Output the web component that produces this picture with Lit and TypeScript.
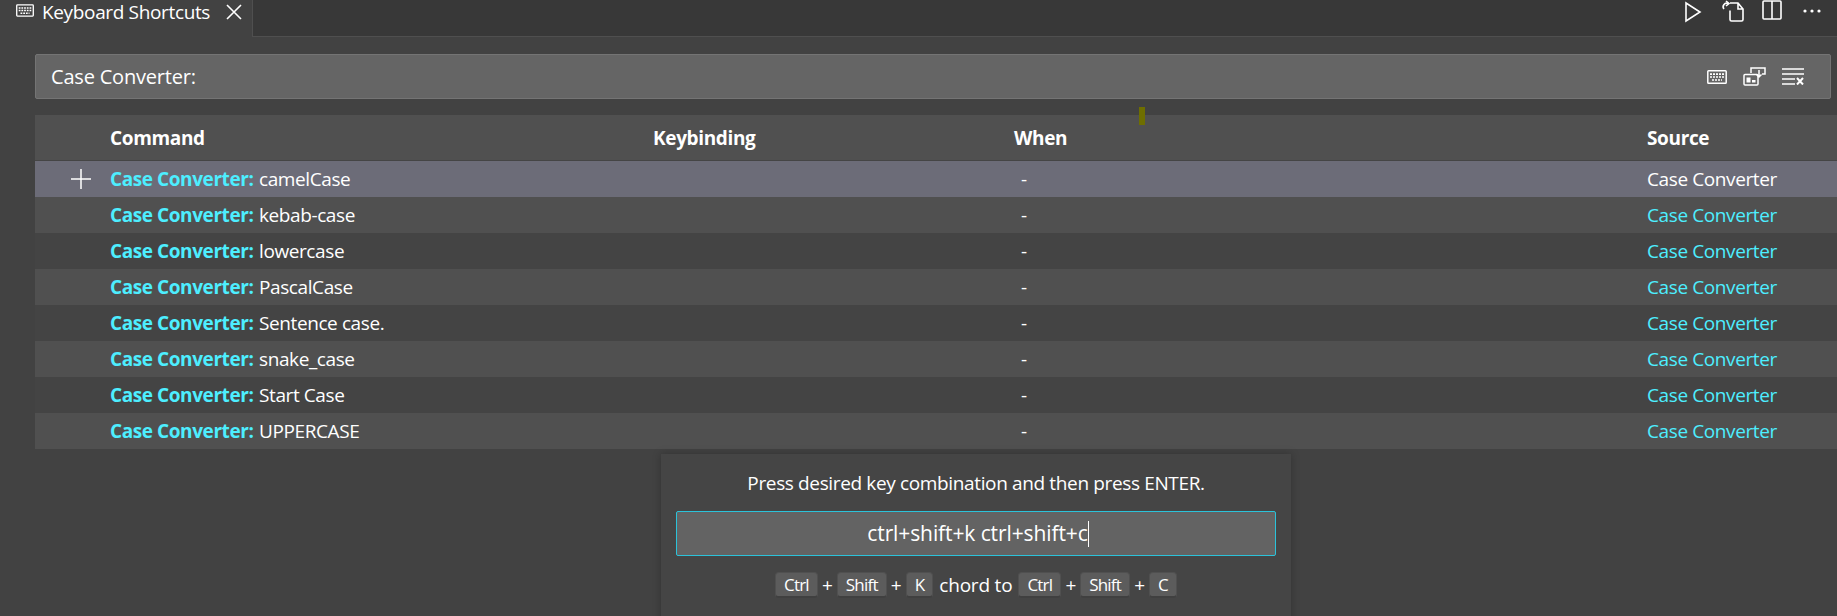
import { LitElement, html, css, svg } from "lit";
import { customElement } from "lit/decorators.js";

const rows = ["camelCase", "kebab-case", "lowercase", "PascalCase", "Sentence case.", "snake_case", "Start Case", "UPPERCASE"];

const kb = (w: number, h: number) => svg`<svg class="ico" width=${w} height=${h} viewBox="0 0 20 14" fill="none" stroke="#fff" stroke-width="1.5"><rect x="0.8" y="0.8" width="18.4" height="12.4" rx="0.8"/><path d="M3 4.200h14M3 7h14M5 10h10" stroke-width="1.7" stroke-dasharray="2 1"/></svg>`;

@customElement("app-root")
export class AppRoot extends LitElement {
  static styles = css`
    :host { display: block; width: 1837px; height: 616px; overflow: hidden; background: #424242; color: #fff;
      font-family: "Open Sans", "Noto Sans", sans-serif; font-size: 19px; position: relative; }
    .tabs { display: flex; height: 37px; background: #383838; }
    .tab { width: 253px; height: 37px; box-sizing: border-box; background: #424242; border-right: 1px solid #4f4f4f;
      display: flex; align-items: flex-start; padding: 0 0 0 16px; }
    .tab .ico { margin-top: 4px; }
    .tab .label { margin-left: 8px; line-height: 25px; font-size: 19px; letter-spacing: -0.35px; white-space: nowrap; }
    .close { margin-left: 15px; margin-top: 3px; }
    .rest { flex: 1; border-bottom: 1px solid #4f4f4f; display: flex; justify-content: flex-end; align-items: flex-start; gap: 16px; padding: 0 15px 0 0; }
    .rest svg { display: block; }
    .search { margin: 17px 6px 0 35px; height: 45px; box-sizing: border-box; background: #656565; border: 1px solid #747474; border-radius: 2px;
      display: flex; align-items: center; padding: 0 26px 0 15px; font-size: 20px; letter-spacing: -0.2px; }
    .search .t { flex: 1; }
    .search .icons { display: flex; align-items: center; gap: 16px; }
    .table { margin: 16px 0 0 35px; }
    .row { display: grid; grid-template-columns: 75px 543px 361px 633px 1fr; height: 36px; align-items: center; background: #505050; font-size: 19px; letter-spacing: -0.4px; line-height: 34px; }
    .row.alt { background: #444444; }
    .row.sel { background: #6c6c78; }
    .row.head { height: 46px; font-weight: 700; letter-spacing: -0.35px; border-bottom: 1px solid #454545; box-sizing: border-box; padding-top: 1px; }
    .act { display: flex; justify-content: flex-end; }
    .act svg { margin-right: 19px; }
    .hl { color: #4deeff; font-weight: 700; letter-spacing: -0.42px; margin-right: 1px; }
    .src { color: #4deeff; }
    .dash { padding-left: 7px; }
    .mark { position: absolute; left: 1139px; top: 107px; width: 6px; height: 18px; background: #6e6e00; }
    .dialog { position: absolute; left: 661px; top: 454px; width: 630px; height: 170px; box-sizing: border-box; background: #454545;
      box-shadow: 0 0 8px rgba(0,0,0,.25); padding: 16px 15px 0; display: flex; flex-direction: column; align-items: center; }
    .msg { font-size: 19px; letter-spacing: -0.36px; line-height: 26px; white-space: nowrap; }
    .input { margin-top: 15px; width: 600px; height: 45px; box-sizing: border-box; background: #636363; border: 1px solid #2bc3da; border-radius: 2px;
      display: flex; align-items: center; justify-content: center; font-size: 21px; letter-spacing: -0.1px; padding: 0 0 2px 4px; }
    .caret { display: inline-block; width: 1px; height: 26px; background: #fff; margin-top: 2px; }
    .keys { margin-top: 16px; display: flex; align-items: center; font-size: 19px; letter-spacing: -0.2px; }
    kbd { font: inherit; font-size: 17px; letter-spacing: -0.8px; background: #5c5c5c; border: 1px solid #505050; border-bottom: 2px solid #404040; border-radius: 4px; padding: 0 8px; line-height: 23px; display: inline-block; }
    .p { width: 19px; text-align: center; }
    .chord { margin: 0 6px; }
  `;
  render() {
    return html`
      <div class="tabs">
        <div class="tab">${kb(18, 13)}<span class="label">Keyboard Shortcuts</span>
          <svg class="close" width="18" height="18" viewBox="0 0 18 18" stroke="#fff" stroke-width="1.6"><path d="M2 2l14 14M16 2L2 16"/></svg>
        </div>
        <div class="rest">
          <svg width="22" height="24" viewBox="0 0 22 24" fill="none" stroke="#fff" stroke-width="1.6"><path d="M3 3l14 9-14 9z"/></svg>
          <svg width="24" height="24" viewBox="0 0 24 24" fill="none" stroke="#fff" stroke-width="1.6"><path d="M9 3h8l5 6v10.500a1.500 1.500 0 0 1-1.500 1.500H10.500A1.500 1.500 0 0 1 9 19.500v-9M17 3v6h5M3 9a3.500 3.500 0 0 1 4-5.500M5 1l3 2.500L5 6"/></svg>
          <svg width="25" height="22" viewBox="0 0 25 22" fill="none" stroke="#fff" stroke-width="1.6"><rect x="2" y="1" width="18" height="18" rx="1"/><path d="M11 1v18"/></svg>
          <svg width="20" height="22" viewBox="0 0 20 22" fill="#fff"><circle cx="3" cy="11" r="1.600"/><circle cx="10" cy="11" r="1.600"/><circle cx="17" cy="11" r="1.600"/></svg>
        </div>
      </div>
      <div class="search">
        <span class="t">Case Converter:</span>
        <div class="icons">
          ${kb(20, 14)}
          <svg width="23" height="19" viewBox="0 0 23 19" fill="none" stroke="#fff" stroke-width="1.500"><path d="M8 6V1h14v6h-3M16 3v7M13.500 7.500L16 10l2.500-2.500"/><rect x="1" y="7.500" width="14" height="10.500" rx="1"/><path d="M3.500 10.500h4v5h-4zM9 13h3.500v2.500H9z" fill="#fff" stroke="none"/></svg>
          <svg width="22" height="17" viewBox="0 0 22 17" fill="none" stroke="#fff" stroke-width="1.600"><path d="M0 1h22M0 6h22M0 11h13M0 16h13"/><path d="M15 10l6 6.500M21 10l-6 6.500" stroke-width="2"/></svg>
        </div>
      </div>
      <div class="table">
        <div class="row head"><span></span><span>Command</span><span>Keybinding</span><span>When</span><span>Source</span></div>
        ${rows.map((r, i) => html`
          <div class="row ${i === 0 ? "sel" : i % 2 ? "" : "alt"}">
            <span class="act">${i === 0 ? html`<svg width="20" height="20" viewBox="0 0 20 20" stroke="#fff" stroke-width="1.500"><path d="M10 0v20M0 10h20"/></svg>` : ""}</span>
            <span><span class="hl">Case Converter:</span> ${r}</span>
            <span></span>
            <span class="dash">-</span>
            <span class=${i === 0 ? "" : "src"}>Case Converter</span>
          </div>`)}
      </div>
      <div class="mark"></div>
      <div class="dialog">
        <div class="msg">Press desired key combination and then press ENTER.</div>
        <div class="input">ctrl+shift+k ctrl+shift+c<span class="caret"></span></div>
        <div class="keys"><kbd>Ctrl</kbd><span class="p">+</span><kbd>Shift</kbd><span class="p">+</span><kbd>K</kbd><span class="chord">chord to</span><kbd>Ctrl</kbd><span class="p">+</span><kbd>Shift</kbd><span class="p">+</span><kbd>C</kbd></div>
      </div>
    `;
  }
}
